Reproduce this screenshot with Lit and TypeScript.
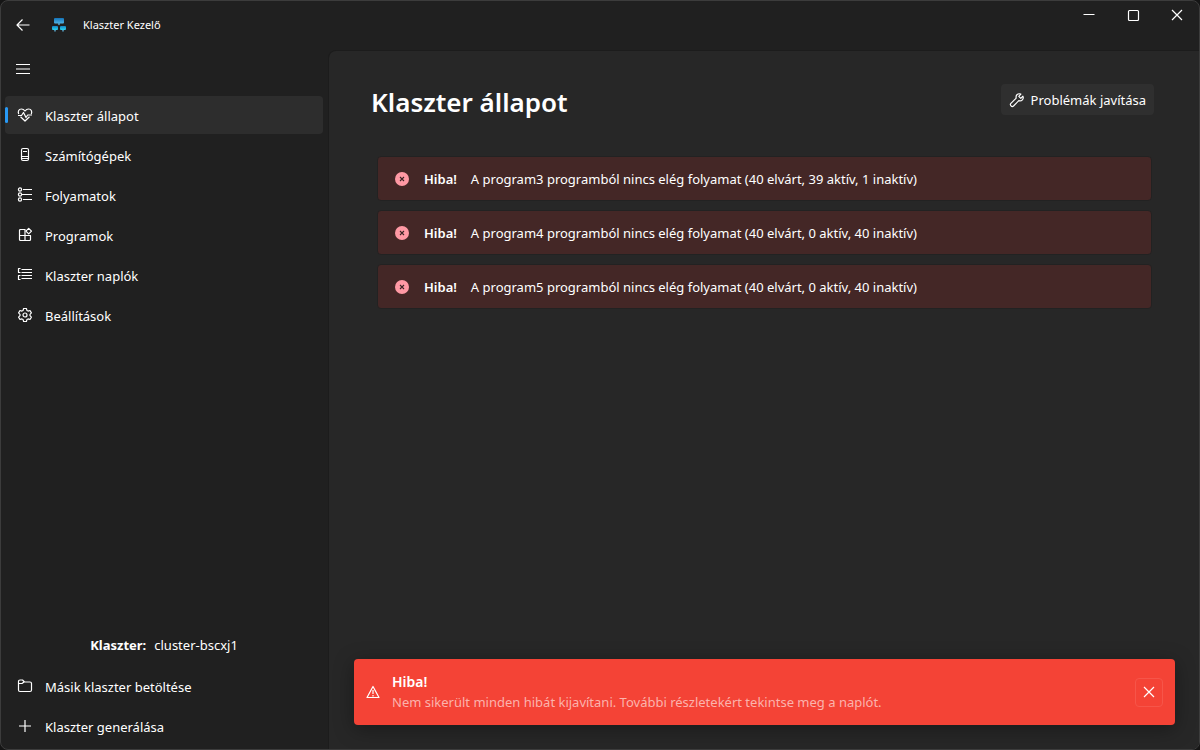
import { LitElement, html, css, svg } from "lit";
import { customElement, property, state } from "lit/decorators.js";
import { classMap } from "lit/directives/class-map.js";

const glyphs: Record<string, unknown> = {
  back: svg`<path d="M14.5 8H2M7.5 2.5 2 8l5.5 5.5"/>`,
  menu: svg`<path d="M1 3.5h14M1 8h14M1 12.5h14"/>`,
  heart: svg`<path d="M1.700 7C.6 4.600 1.800 2 4.400 2 6.100 2 7.200 2.900 8 4 8.800 2.900 9.900 2 11.600 2c2.600 0 3.800 2.600 2.700 5M3.500 9.800 8 14l4.500-4.200M1 8.500h3.500L6.500 5.500l2.500 5 1.700-2.500H15"/>`,
  server: svg`<rect x="4.500" y="1.500" width="7" height="12" rx="1.500"/><path d="M6 4.500h4M5 9.500h6M5 11.500h6"/>`,
  process: svg`<circle cx="3" cy="2.500" r="1.600"/><circle cx="3" cy="7.500" r="1.600"/><circle cx="3" cy="12.500" r="1.600"/><path d="M6 2.500h9M4.500 7.500H15M6 12.500h9"/>`,
  apps: svg`<path d="M8.500 2.500H3.500a1 1 0 0 0-1 1v9a1 1 0 0 0 1 1h9a1 1 0 0 0 1-1V8.500h-11M8 2.500v11"/><path d="m11.700 1.300 2.800 2.800-2.800 2.800-2.800-2.800z"/>`,
  logs: svg`<path d="M3.500 1.500h-2v4h2M3.500 8.500h-2v4h2M4.500 2.500H15M4.500 5.500H15M4.500 8.500H15M4.500 11.500H15"/>`,
  gear: svg`<path d="M6.600 1.500h2.800l.5 1.900 1.200.7 1.900-.6 1.400 2.400L13 7.300v1.400l1.400 1.400-1.400 2.400-1.900-.6-1.200.7-.5 1.900H6.600l-.5-1.900-1.200-.7-1.900.6-1.400-2.400L3 8.700V7.300L1.600 5.900 3 3.500l1.900.6 1.200-.7z"/><circle cx="8" cy="8" r="2"/>`,
  folder: svg`<path d="M1.500 3.500A1.500 1.500 0 0 1 3 2h2.500l2 2H13a1.500 1.500 0 0 1 1.500 1.500v6.500a1.500 1.500 0 0 1-1.500 1.500H3a1.500 1.500 0 0 1-1.500-1.500zM1.500 5.500H5L7 4"/>`,
  plus: svg`<path d="M8 2v12M2 8h12"/>`,
  wrench: svg`<path d="M13.900 4.200 11.800 6.300 9.800 4.300l2.100-2.200c-2.900-1.200-5.500 1.100-4.700 4L1.900 11.400c-1.500 1.600.9 4.100 2.600 2.600l5.300-5.300c2.900.8 5.300-1.700 4.100-4.500z"/>`,
  warning: svg`<path d="M8 2.500 14 13.500H2zM8 6v4M8 11v1.500"/>`,
  minimize: svg`<path d="M2.500 7.500h11"/>`,
  maximize: svg`<rect x="3.500" y="3.500" width="10" height="10" rx="1"/>`,
  close: svg`<path d="m3 3 10 10M13 3 3 13"/>`,
};

@customElement("line-icon")
class LineIcon extends LitElement {
  @property() name = "";

  static styles = css`
    :host {
      display: block;
      flex: none;
      width: 16px;
      height: 16px;
    }
    .glyph {
      display: block;
      fill: none;
      stroke: currentColor;
      stroke-width: 1.2;
      stroke-linejoin: round;
    }
  `;

  render() {
    return html`<svg class="glyph" width="16" height="16" viewBox="0 0 16 16" aria-hidden="true">${glyphs[this.name]}</svg>`;
  }
}

interface Problem {
  program: string;
  expected: number;
  active: number;
  inactive: number;
}

@customElement("app-root")
class AppRoot extends LitElement {
  @state() selected = "heart";
  @state() toastOpen = true;

  pages = [
    { icon: "heart", label: "Klaszter állapot" },
    { icon: "server", label: "Számítógépek" },
    { icon: "process", label: "Folyamatok" },
    { icon: "apps", label: "Programok" },
    { icon: "logs", label: "Klaszter naplók" },
    { icon: "gear", label: "Beállítások" },
  ];

  problems: Problem[] = [
    { program: "program3", expected: 40, active: 39, inactive: 1 },
    { program: "program4", expected: 40, active: 0, inactive: 40 },
    { program: "program5", expected: 40, active: 0, inactive: 40 },
  ];

  static styles = css`
    :host {
      display: block;
      background: #151515;
      color: #fff;
      font: 13px/20px "Segoe UI", "Noto Sans", sans-serif;
    }
    *,
    *::before {
      box-sizing: border-box;
    }
    button {
      margin: 0;
      padding: 0;
      border: 0;
      background: none;
      color: inherit;
      font: inherit;
      display: flex;
      align-items: center;
      justify-content: center;
    }
    .window {
      display: flex;
      flex-direction: column;
      height: 100vh;
      border: 1px solid #3c3c3c;
      border-radius: 8px;
      background: #202020;
      overflow: hidden;
    }
    .titlebar {
      display: flex;
      align-items: center;
      height: 49px;
      flex: none;
      padding-bottom: 2px;
    }
    .back {
      width: 44px;
      height: 40px;
    }
    .logo {
      display: block;
      margin: 0 16px 0 6px;
    }
    .app-name {
      flex: 1;
      font-size: 11px;
    }
    .caption {
      display: flex;
      align-self: flex-start;
    }
    .caption-button {
      width: 44px;
      height: 28px;
    }
    .body {
      display: flex;
      flex: 1;
      min-height: 0;
    }
    .sidebar {
      display: flex;
      flex-direction: column;
      width: 327px;
      flex: none;
      padding: 0 5px 4px 4px;
    }
    .menu {
      width: 36px;
      height: 38px;
      margin-bottom: 8px;
    }
    .links {
      display: flex;
      flex-direction: column;
      gap: 2px;
      margin: 0;
      padding: 0;
      list-style: none;
    }
    .link {
      display: flex;
      align-items: center;
      gap: 12px;
      height: 38px;
      padding: 0 12px;
      border-radius: 4px;
      color: inherit;
      text-decoration: none;
      position: relative;
    }
    .link.active {
      background: #2d2d2d;
    }
    .link.active::before {
      content: "";
      position: absolute;
      left: 0;
      top: 11px;
      width: 3px;
      height: 16px;
      border-radius: 2px;
      background: #2899f5;
    }
    .label {
      padding-top: 2px;
    }
    .cluster {
      display: flex;
      justify-content: center;
      gap: 8px;
      margin: auto 0 12px;
    }
    .main {
      flex: 1;
      min-width: 0;
      position: relative;
      padding: 33px 45px 0 42px;
      background: #272727;
      border: solid #1c1c1c;
      border-width: 1px 0 0 1px;
      border-top-left-radius: 8px;
    }
    .heading {
      display: flex;
      justify-content: space-between;
      align-items: flex-start;
      height: 72px;
    }
    .title {
      margin: 0;
      font-size: 26px;
      line-height: 36px;
      font-weight: 600;
    }
    .fix {
      gap: 6px;
      height: 31px;
      padding: 0 8px;
      border-radius: 4px;
      background: #2f2f2f;
    }
    .problems {
      display: flex;
      flex-direction: column;
      gap: 9px;
      margin: 0;
      padding: 0 2px 0 6px;
      list-style: none;
    }
    .problem {
      display: flex;
      align-items: center;
      gap: 14px;
      min-height: 45px;
      padding: 0 16px;
      border: 1px solid #222;
      border-radius: 4px;
      background: #442726;
    }
    .error-dot {
      display: block;
      flex: none;
    }
    .strong {
      font-weight: 600;
    }
    .bold {
      font-weight: 700;
    }
    .toast {
      position: absolute;
      left: 25px;
      right: 24px;
      bottom: 24px;
      display: flex;
      align-items: center;
      gap: 11px;
      height: 66px;
      padding: 0 12px 0 11px;
      border-radius: 4px;
      background: #f44336;
      box-shadow: 0 4px 20px rgba(0, 0, 0, 0.35);
    }
    .toast-text {
      flex: 1;
      color: #fbb3ad;
    }
    .toast-title {
      color: #fff;
      font-size: 14px;
      font-weight: 600;
    }
    .dismiss {
      width: 28px;
      height: 29px;
      border: 1px solid #f65549;
      border-radius: 4px;
    }
  `;

  select(event: Event, icon: string) {
    event.preventDefault();
    this.selected = icon;
  }

  renderLink(icon: string, label: string) {
    const active = this.selected === icon;
    return html`<li>
      <a href="#${icon}" class=${classMap({ link: true, active })} @click=${(e: Event) => this.select(e, icon)}>
        <line-icon name=${icon}></line-icon><span class="label">${label}</span>
      </a>
    </li>`;
  }

  renderProblem(p: Problem) {
    return html`<li class="problem">
      <svg class="error-dot" width="16" height="16" viewBox="0 0 16 16" aria-hidden="true">
        <circle cx="8" cy="8" r="7" fill="#ff99a4" />
        <path d="m6 6 4 4M10 6 6 10" stroke="#3a2424" stroke-width="1.1" />
      </svg>
      <span class="strong">Hiba!</span>
      <span>A ${p.program} programból nincs elég folyamat (${p.expected} elvárt, ${p.active} aktív, ${p.inactive} inaktív)</span>
    </li>`;
  }

  render() {
    return html`
      <div class="window">
        <header class="titlebar">
          <button class="back" aria-label="Vissza"><line-icon name="back"></line-icon></button>
          <svg class="logo" width="16" height="16" viewBox="0 0 16 16" aria-hidden="true">
            <defs>
              <linearGradient id="screen" x2="0" y2="1">
                <stop offset="0" stop-color="#1473b8" />
                <stop offset="1" stop-color="#4fb4e6" />
              </linearGradient>
              <linearGradient id="node" x2="0" y2="1">
                <stop offset="0" stop-color="#1684c4" />
                <stop offset="1" stop-color="#2ad4ee" />
              </linearGradient>
            </defs>
            <path d="M7 6h2v2H7zM3 12h2v2.500H3zM11 12h2v2.500h-2z" fill="#4b83a0" />
            <rect x="3" y="1" width="10" height="5.500" rx="1" fill="url(#screen)" />
            <rect x="1" y="9" width="6" height="4" rx="1" fill="url(#node)" />
            <rect x="9" y="9" width="6" height="4" rx="1" fill="url(#node)" />
          </svg>
          <span class="app-name">Klaszter Kezelő</span>
          <div class="caption">
            <button class="caption-button" aria-label="Kis méret"><line-icon name="minimize"></line-icon></button>
            <button class="caption-button" aria-label="Teljes méret"><line-icon name="maximize"></line-icon></button>
            <button class="caption-button" aria-label="Bezárás"><line-icon name="close"></line-icon></button>
          </div>
        </header>
        <div class="body">
          <nav class="sidebar">
            <button class="menu" aria-label="Menü"><line-icon name="menu"></line-icon></button>
            <ul class="links">
              ${this.pages.map((p) => this.renderLink(p.icon, p.label))}
            </ul>
            <div class="cluster"><span class="bold">Klaszter:</span><span>cluster-bscxj1</span></div>
            <ul class="links">
              ${this.renderLink("folder", "Másik klaszter betöltése")} ${this.renderLink("plus", "Klaszter generálása")}
            </ul>
          </nav>
          <main class="main">
            <div class="heading">
              <h1 class="title">Klaszter állapot</h1>
              <button class="fix"><line-icon name="wrench"></line-icon>Problémák javítása</button>
            </div>
            <ul class="problems">
              ${this.problems.map((p) => this.renderProblem(p))}
            </ul>
            ${this.toastOpen
              ? html`<div class="toast" role="alert">
                  <line-icon name="warning"></line-icon>
                  <div class="toast-text">
                    <div class="toast-title">Hiba!</div>
                    <div>Nem sikerült minden hibát kijavítani. További részletekért tekintse meg a naplót.</div>
                  </div>
                  <button class="dismiss" aria-label="Bezárás" @click=${() => (this.toastOpen = false)}>
                    <line-icon name="close"></line-icon>
                  </button>
                </div>`
              : null}
          </main>
        </div>
      </div>
    `;
  }
}
